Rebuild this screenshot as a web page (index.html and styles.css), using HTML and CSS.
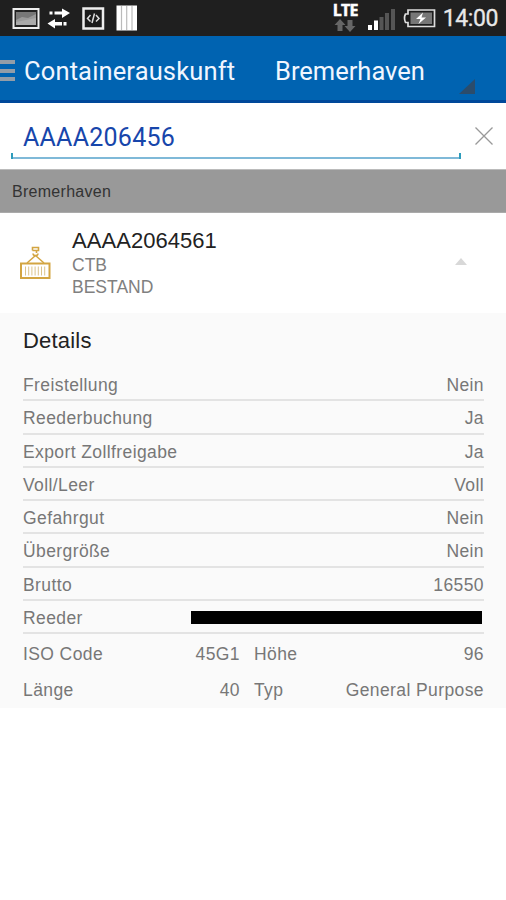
FILE: index.html
```
<!DOCTYPE html>
<html lang="de">
<head>
    <meta charset="UTF-8">
    <meta name="viewport" content="width=device-width, initial-scale=1.0">
    <title>Containerauskunft</title>
    <link rel="stylesheet" href="styles.css">
</head>
<body>
    <div class="status-bar">
        <svg class="status-left" width="140" height="36" viewBox="0 0 140 36">
            <!-- picture -->
            <rect x="13.5" y="9" width="25" height="19" fill="#222" stroke="#eee" stroke-width="2"/>
            <rect x="16" y="12" width="20" height="13" fill="#999"/>
            <path d="M16 20L22 17L28 18L36 14V12H16Z" fill="#777"/>
            <path d="M16 25V22L36 18V25Z" fill="#aaa"/>
            <!-- transfer -->
            <path d="M49.5 11.5h3v3h-3z M54.5 11.5H62V8.5L70 13L62 18V14.5H54.5Z" fill="#fff"/>
            <path d="M47.5 23.5L55 19V22H62V25.5H55V28.5Z M63.5 22h3v3.5h-3z" fill="#fff"/>
            <!-- code -->
            <rect x="83.5" y="8.5" width="19.5" height="20" fill="#1c1c1c" stroke="#eee" stroke-width="2.5"/>
            <path d="M90.5 15L87.5 18.5L90.5 21.5M96 15L99 18.5L96 21.5M94.5 13.5L92 23" fill="none" stroke="#ddd" stroke-width="1.5"/>
            <!-- bars -->
            <rect x="116.5" y="5.5" width="20.5" height="25" fill="#fff"/>
            <path d="M121.5 6V30M126.7 6V30M132 6V30" stroke="#bbb" stroke-width="1.2"/>
        </svg>
        <div class="status-right">
            <div class="network">
                <span class="lte">LTE</span>
                <svg width="22" height="13" viewBox="0 0 22 13">
                    <path d="M6 0L11.5 6H8.5V12H3.5V6H0.5Z" fill="#666"/>
                    <path d="M16 13L10.5 7H13.5V1H18.5V7H21.5Z" fill="#666"/>
                </svg>
            </div>
            <svg class="signal" width="30" height="36" viewBox="0 0 30 36">
                <path d="M1 25h4v5h-4z M7 20.5h4v9.5h-4z" fill="#fff"/>
                <path d="M12.5 17h4v13h-4z M18 13h4v17h-4z M24 9h4v21h-4z" fill="#555"/>
            </svg>
            <svg class="battery" width="34" height="36" viewBox="0 0 34 36">
                <path d="M5 10H31.5V26.5H5V22.5H2.5Q0.5 18 2.5 14H5Z" fill="#1c1c1c" stroke="#ddd" stroke-width="1.7"/>
                <rect x="7.5" y="12.5" width="21.5" height="11.5" fill="#777"/>
                <path d="M20 12.5L13 19H17.5L15.5 24L23 17.5H18.5Z" fill="#fff"/>
            </svg>
            <span class="clock">14:00</span>
        </div>
    </div>

    <header class="action-bar">
        <div class="menu-icon"><i></i><i></i><i></i></div>
        <h1>Containerauskunft</h1>
        <div class="location">Bremerhaven</div>
        <div class="spinner-corner"></div>
    </header>

    <div class="search">
        <div class="search-field">AAAA206456</div>
        <svg class="clear" width="20" height="20" viewBox="0 0 20 20">
            <path d="M1.5 1.5L18.5 18.5M18.5 1.5L1.5 18.5" stroke="#999" stroke-width="1.3"/>
        </svg>
    </div>

    <div class="section-title"><span>Bremerhaven</span></div>

    <div class="container-item">
        <svg class="container-icon" width="32" height="34" viewBox="0 0 32 34" fill="none" stroke="#d3a542">
            <path d="M13.5 4.500V1.500H19.500V4.500H13.500M17.500 4.500V7M14 7.500Q14 9.500 16.500 9.500Q19 9.500 19 7.500" stroke-width="1.600"/>
            <path d="M16.500 9.500L8 17M16.500 9.500L25 17" stroke-width="1.500"/>
            <rect x="2" y="17.500" width="28.500" height="14.500" stroke-width="2"/>
            <path d="M6.500 20.500V29.500M9.700 20.500V29.500M12.900 20.500V29.500M16.100 20.500V29.500M19.300 20.500V29.500M22.500 20.500V29.500M25.700 20.500V29.500" stroke="#dcc48c"/>
        </svg>
        <div class="item-text">
            <div class="number">AAAA2064561</div>
            <div class="sub">CTB</div>
            <div class="sub">BESTAND</div>
        </div>
        <div class="collapse"></div>
    </div>

    <div class="details">
        <h2>Details</h2>
        <div class="row"><span>Freistellung</span><span>Nein</span></div>
        <div class="row"><span>Reederbuchung</span><span>Ja</span></div>
        <div class="row"><span>Export Zollfreigabe</span><span>Ja</span></div>
        <div class="row"><span>Voll/Leer</span><span>Voll</span></div>
        <div class="row"><span>Gefahrgut</span><span>Nein</span></div>
        <div class="row"><span>Übergröße</span><span>Nein</span></div>
        <div class="row"><span>Brutto</span><span>16550</span></div>
        <div class="row"><span>Reeder</span><span class="redacted"></span></div>
        <div class="pairs">
            <span>ISO Code</span><span class="value">45G1</span><span class="second">Höhe</span><span class="value">96</span>
            <span>Länge</span><span class="value">40</span><span class="second">Typ</span><span class="value">General Purpose</span>
        </div>
    </div>
</body>
</html>
```
FILE: styles.css
```
* {
    box-sizing: border-box;
}

body {
    margin: 0;
    background-color: #fff;
    font-family: "Liberation Sans", Arial, sans-serif;
    color: #777;
}

h1, h2 {
    margin: 0;
    font-weight: normal;
}

svg {
    display: block;
}

.status-bar {
    display: flex;
    justify-content: space-between;
    height: 36px;
    background-color: #1f1f1f;
    color: #fff;
}

.status-right {
    display: flex;
    padding-right: 8px;
}

.network {
    width: 24px;
    margin-right: 10px;
    padding-top: 3px;
}

.network svg {
    margin: 1px 0 0 1px;
}

.lte {
    display: block;
    height: 15px;
    font: bold 16px/15px "Open Sans", sans-serif;
    letter-spacing: -0.8px;
    -webkit-text-stroke: 0.5px #fff;
}

.signal {
    margin-right: 6px;
}

.battery {
    margin-right: 6px;
}

.clock {
    font: 23px/38px Roboto, sans-serif;
    letter-spacing: -0.4px;
    color: #e8e8e8;
    -webkit-text-stroke: 0.3px #e8e8e8;
}

.action-bar {
    display: flex;
    height: 67px;
    background-color: #0063b1;
    border-bottom: 3px solid #00489a;
    color: #f0f6ff;
    font: 25px/70px Roboto, sans-serif;
}

.action-bar h1 {
    width: 251px;
    font-size: 25.5px;
    letter-spacing: 0.14px;
}

.menu-icon {
    width: 15px;
    margin-right: 9px;
    padding-top: 24px;
}

.menu-icon i {
    display: block;
    height: 4px;
    margin-bottom: 4.5px;
    background-color: #929da8;
}

.location {
    flex: 1;
    font-size: 25.5px;
}

.spinner-corner {
    align-self: flex-end;
    margin: 0 31px 6px 0;
    border-bottom: 15px solid #2b4c6b;
    border-left: 16px solid transparent;
}

.search {
    display: flex;
    height: 66px;
    padding: 0 12px 10px 11px;
}

.search-field {
    position: relative;
    width: 450px;
    padding-left: 12px;
    border-bottom: 2px solid #7fb9d8;
    color: #1746ab;
    font: 25px/70px Roboto, sans-serif;
    letter-spacing: 0.25px;
}

/* turned-up ends of the underline */
.search-field::before,
.search-field::after {
    content: "";
    position: absolute;
    bottom: -2px;
    width: 2px;
    height: 6px;
    background-color: #2d9cbc;
}

.search-field::before {
    left: 0;
}

.search-field::after {
    right: 0;
}

.clear {
    margin: 23px 0 0 13px;
}

.section-title {
    height: 44px;
    padding-left: 12px;
    background-color: #999;
    border-top: 1px solid #bbb;
    border-bottom: 1px solid #aaa;
    color: #333;
    font-size: 16px;
    line-height: 43px;
    letter-spacing: 0.28px;
}

.container-item {
    display: flex;
    height: 100px;
    padding-left: 19px;
}

.container-icon {
    margin: 33px 21px 0 0;
}

.item-text {
    flex: 1;
    padding-top: 15px;
}

.number {
    height: 26px;
    color: #222;
    font-size: 22px;
    line-height: 26px;
    letter-spacing: 0.05px;
}

.sub {
    height: 22px;
    color: #808080;
    font-size: 17.5px;
    line-height: 23px;
}

.collapse {
    width: 0;
    height: 0;
    margin: 45px 39px 0 0;
    border: 6px solid transparent;
    border-top: 0;
    border-bottom: 7px solid #d8d8d8;
}

.details {
    height: 395px;
    padding: 12px 22px 0 23px;
    background-color: #fafafa;
    font-size: 17.5px;
    letter-spacing: 0.4px;
}

.details h2 {
    height: 43px;
    color: #222;
    font-size: 22px;
    line-height: 32px;
    letter-spacing: 0.2px;
}

.row {
    display: flex;
    justify-content: space-between;
    height: 33.25px;
    border-bottom: 2px solid #e3e3e3;
    line-height: 34px;
}

.redacted {
    width: 291px;
    height: 13px;
    margin: 10px 2px 0 0;
    background-color: #000;
}

.pairs {
    display: grid;
    grid-template-columns: 100px 117px 60px 1fr;
    line-height: 36.3px;
    padding-top: 2px;
}

.value {
    text-align: right;
}

.second {
    padding-left: 14px;
}
```
